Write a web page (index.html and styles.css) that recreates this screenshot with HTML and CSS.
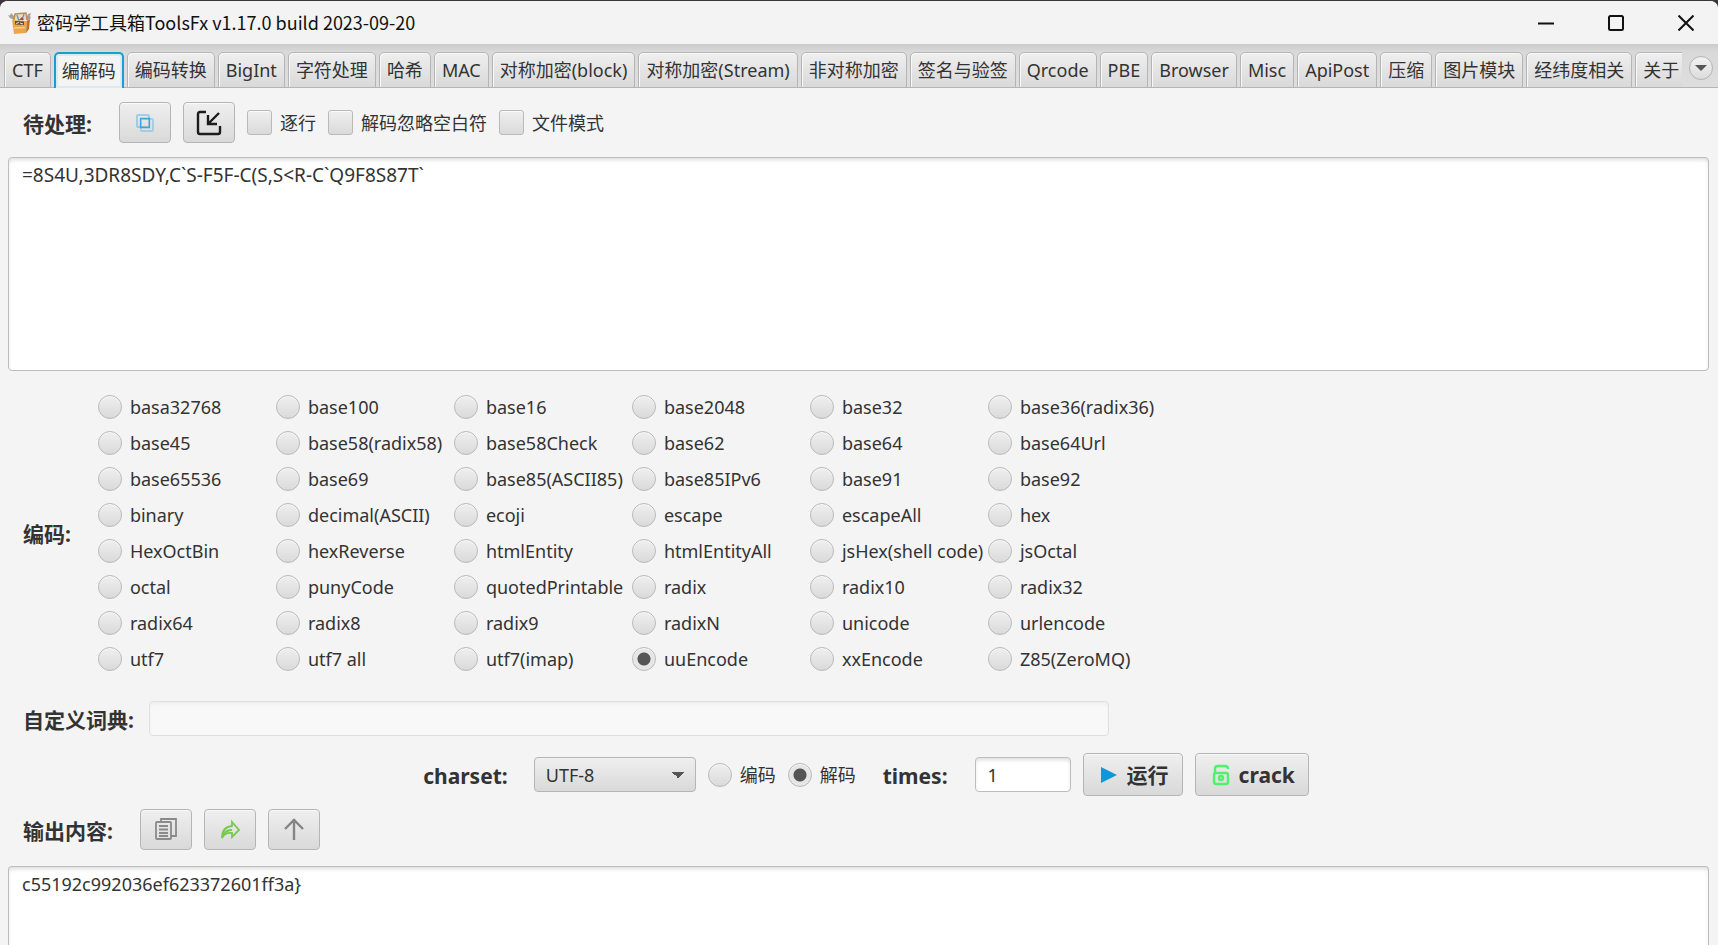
FILE: index.html
```html
<!DOCTYPE html>
<html lang="zh-CN">
<head>
<meta charset="utf-8">
<title>密码学工具箱ToolsFx</title>
<link rel="stylesheet" href="styles.css">
</head>
<body>
<div class="window">
  <header class="titlebar">
    <svg class="app-icon" viewBox="0 0 24 24" aria-hidden="true">
      <path d="M6 9 2 7 0 4l2 .5L3 2l3 3zM18 8l2-5 3-1-1 3 1 2-4 3z" fill="#a3a19e"/>
      <path d="M6 9 7 3l11-1 1 7" fill="#e9dccb" stroke="#c98b45" stroke-width="1.500"/>
      <path d="M9 4l2 6M16 3l-2 6" stroke="#5f9db5" stroke-width="1.400"/>
      <path d="M11 9l3-3 2 3" fill="#c23a2b"/>
      <path d="M4 9l15 1-1 12-12 1z" fill="#eca64a"/>
      <path d="M19 10l3-2-1 10-3 4z" fill="#bd6f28"/>
      <path d="M7 10l9 .5v3.500l-9-.5z" fill="#5d4a38"/>
      <path d="M8 12.500l3-1M12 12l3 1" stroke="#dcdcdc" stroke-width="1.200"/>
      <path d="M6 17l11-.5" stroke="#f8cd85" stroke-width="1.500"/>
    </svg>
    <h1 class="title">密码学工具箱ToolsFx v1.17.0 build 2023-09-20</h1>
    <div class="window-buttons">
      <button type="button" class="window-button" aria-label="最小化"><svg viewBox="0 0 16 16"><path d="M0 8.500h16"/></svg></button>
      <button type="button" class="window-button" aria-label="最大化"><svg viewBox="0 0 16 16"><rect x="1" y="1" width="14" height="14" rx="1.500"/></svg></button>
      <button type="button" class="window-button" aria-label="关闭"><svg viewBox="0 0 16 16"><path d="M.5.5l15 15M15.500.5l-15 15"/></svg></button>
    </div>
  </header>

  <nav class="tabbar">
    <div class="tabs">
      <button type="button" class="tab">CTF</button>
      <button type="button" class="tab tab-active">编解码</button>
      <button type="button" class="tab">编码转换</button>
      <button type="button" class="tab">BigInt</button>
      <button type="button" class="tab">字符处理</button>
      <button type="button" class="tab">哈希</button>
      <button type="button" class="tab">MAC</button>
      <button type="button" class="tab">对称加密(block)</button>
      <button type="button" class="tab">对称加密(Stream)</button>
      <button type="button" class="tab">非对称加密</button>
      <button type="button" class="tab">签名与验签</button>
      <button type="button" class="tab">Qrcode</button>
      <button type="button" class="tab">PBE</button>
      <button type="button" class="tab">Browser</button>
      <button type="button" class="tab">Misc</button>
      <button type="button" class="tab">ApiPost</button>
      <button type="button" class="tab">压缩</button>
      <button type="button" class="tab">图片模块</button>
      <button type="button" class="tab">经纬度相关</button>
      <button type="button" class="tab">关于</button>
    </div>
    <button type="button" class="tab-menu" aria-label="更多标签"><svg viewBox="0 0 12 8"><path d="M0 1h12L6 7z"/></svg></button>
  </nav>

  <main class="content">
    <div class="row input-row">
      <label class="heading" for="source">待处理:</label>
      <div class="tools">
        <button type="button" class="button icon-button" aria-label="复制"><svg class="icon" viewBox="0 0 24 24" fill="none" stroke="#3aa5e3"><rect x="4" y="4" width="12" height="12" rx="1" stroke-opacity=".4" stroke-width="2"/><rect x="8" y="8" width="12" height="12" rx="1" stroke-opacity=".35" stroke-width="2"/><path d="M7 16.500h9.500V7M17 7.500H7.500V17" stroke-width="1.300"/></svg></button>
        <button type="button" class="button icon-button" aria-label="导入"><svg class="icon icon-large" viewBox="0 0 28 28" fill="none" stroke="#1c1c1c" stroke-width="2.400"><path d="M11 3H5Q3 3 3 5v18q0 2 2 2h18q2 0 2-2v-6"/><path d="M24 4 13 15M13 6v9h9"/></svg></button>
        <label class="choice"><input type="checkbox" class="check">逐行</label>
        <label class="choice"><input type="checkbox" class="check">解码忽略空白符</label>
        <label class="choice"><input type="checkbox" class="check">文件模式</label>
      </div>
    </div>

    <textarea id="source" class="area source" spellcheck="false">=8S4U,3DR8SDY,C`S-F5F-C(S,S&lt;R-C`Q9F8S87T`</textarea>

    <div class="row codec-row">
      <span class="heading" id="codec-label">编码:</span>
      <div class="codecs" role="radiogroup" aria-labelledby="codec-label">
        <label class="choice"><input type="radio" name="codec" class="radio">basa32768</label>
        <label class="choice"><input type="radio" name="codec" class="radio">base100</label>
        <label class="choice"><input type="radio" name="codec" class="radio">base16</label>
        <label class="choice"><input type="radio" name="codec" class="radio">base2048</label>
        <label class="choice"><input type="radio" name="codec" class="radio">base32</label>
        <label class="choice"><input type="radio" name="codec" class="radio">base36(radix36)</label>
        <label class="choice"><input type="radio" name="codec" class="radio">base45</label>
        <label class="choice"><input type="radio" name="codec" class="radio">base58(radix58)</label>
        <label class="choice"><input type="radio" name="codec" class="radio">base58Check</label>
        <label class="choice"><input type="radio" name="codec" class="radio">base62</label>
        <label class="choice"><input type="radio" name="codec" class="radio">base64</label>
        <label class="choice"><input type="radio" name="codec" class="radio">base64Url</label>
        <label class="choice"><input type="radio" name="codec" class="radio">base65536</label>
        <label class="choice"><input type="radio" name="codec" class="radio">base69</label>
        <label class="choice"><input type="radio" name="codec" class="radio">base85(ASCII85)</label>
        <label class="choice"><input type="radio" name="codec" class="radio">base85IPv6</label>
        <label class="choice"><input type="radio" name="codec" class="radio">base91</label>
        <label class="choice"><input type="radio" name="codec" class="radio">base92</label>
        <label class="choice"><input type="radio" name="codec" class="radio">binary</label>
        <label class="choice"><input type="radio" name="codec" class="radio">decimal(ASCII)</label>
        <label class="choice"><input type="radio" name="codec" class="radio">ecoji</label>
        <label class="choice"><input type="radio" name="codec" class="radio">escape</label>
        <label class="choice"><input type="radio" name="codec" class="radio">escapeAll</label>
        <label class="choice"><input type="radio" name="codec" class="radio">hex</label>
        <label class="choice"><input type="radio" name="codec" class="radio">HexOctBin</label>
        <label class="choice"><input type="radio" name="codec" class="radio">hexReverse</label>
        <label class="choice"><input type="radio" name="codec" class="radio">htmlEntity</label>
        <label class="choice"><input type="radio" name="codec" class="radio">htmlEntityAll</label>
        <label class="choice"><input type="radio" name="codec" class="radio">jsHex(shell code)</label>
        <label class="choice"><input type="radio" name="codec" class="radio">jsOctal</label>
        <label class="choice"><input type="radio" name="codec" class="radio">octal</label>
        <label class="choice"><input type="radio" name="codec" class="radio">punyCode</label>
        <label class="choice"><input type="radio" name="codec" class="radio">quotedPrintable</label>
        <label class="choice"><input type="radio" name="codec" class="radio">radix</label>
        <label class="choice"><input type="radio" name="codec" class="radio">radix10</label>
        <label class="choice"><input type="radio" name="codec" class="radio">radix32</label>
        <label class="choice"><input type="radio" name="codec" class="radio">radix64</label>
        <label class="choice"><input type="radio" name="codec" class="radio">radix8</label>
        <label class="choice"><input type="radio" name="codec" class="radio">radix9</label>
        <label class="choice"><input type="radio" name="codec" class="radio">radixN</label>
        <label class="choice"><input type="radio" name="codec" class="radio">unicode</label>
        <label class="choice"><input type="radio" name="codec" class="radio">urlencode</label>
        <label class="choice"><input type="radio" name="codec" class="radio">utf7</label>
        <label class="choice"><input type="radio" name="codec" class="radio">utf7 all</label>
        <label class="choice"><input type="radio" name="codec" class="radio">utf7(imap)</label>
        <label class="choice"><input type="radio" name="codec" class="radio" checked>uuEncode</label>
        <label class="choice"><input type="radio" name="codec" class="radio">xxEncode</label>
        <label class="choice"><input type="radio" name="codec" class="radio">Z85(ZeroMQ)</label>
      </div>
    </div>

    <div class="row dict-row">
      <label class="heading" for="dict">自定义词典:</label>
      <input type="text" id="dict" class="field dict" disabled>
    </div>

    <div class="row run-row">
      <label class="heading" for="charset">charset:</label>
      <select id="charset" class="select"><option>UTF-8</option></select>
      <label class="choice"><input type="radio" name="mode" class="radio">编码</label>
      <label class="choice"><input type="radio" name="mode" class="radio" checked>解码</label>
      <label class="heading times-label" for="times">times:</label>
      <input type="text" id="times" class="field times" value="1">
      <button type="button" class="button text-button"><svg class="icon-small" viewBox="0 0 18 20"><path d="M1 2l16 8L1 18z" fill="#1296db"/></svg>运行</button>
      <button type="button" class="button text-button"><svg class="icon-small" viewBox="0 0 18 22" fill="none" stroke="#4cf36b" stroke-width="2.400"><rect x="2" y="9" width="14" height="11" rx="2"/><path d="M3 9V5q0-3 3-3h7q3 0 3 3"/><circle cx="9" cy="14" r="2"/></svg>crack</button>
    </div>

    <div class="row output-row">
      <label class="heading" for="result">输出内容:</label>
      <div class="tools">
        <button type="button" class="button icon-button" aria-label="复制结果"><svg class="icon" viewBox="0 0 24 24" fill="none" stroke="#8a8a8a" stroke-width="1.800"><rect x="2" y="4" width="15" height="17" rx="1"/><path d="M7 4V1h15v17h-5"/><path d="M5 8h9M5 11.500h9M5 15h9M5 18h9"/></svg></button>
        <button type="button" class="button icon-button" aria-label="转发"><svg class="icon" viewBox="0 0 24 24" fill="none" stroke="#78c850" stroke-width="1.800"><path d="M14 4l7 8-7 7v-4q-7-1-10 5 0-11 10-12z"/><path d="M5 17q3-5 9-5"/></svg></button>
        <button type="button" class="button icon-button" aria-label="上移"><svg class="icon" viewBox="0 0 24 24" fill="none" stroke="#858585" stroke-width="2.400"><path d="M12 22V1M3 11l9-9 9 9"/></svg></button>
      </div>
    </div>

    <textarea id="result" class="area result" spellcheck="false">c55192c992036ef623372601ff3a}</textarea>
  </main>
</div>
</body>
</html>
```

FILE: styles.css
```css
* {
  box-sizing: border-box;
}

body {
  margin: 0;
  background: #3a353b;
  color: #333;
  font-family: "Noto Sans", "Noto Sans CJK SC", sans-serif;
  font-size: 18px;
  line-height: 24px;
}

button, input, select, textarea {
  margin: 0;
  font: inherit;
  color: inherit;
}

.window {
  display: flex;
  flex-direction: column;
  height: 100vh;
  overflow: hidden;
  border-top: 1px solid #3a353b;
  border-radius: 8px 8px 0 0;
  background: #f4f4f4;
}

.titlebar {
  display: flex;
  flex: none;
  align-items: center;
  height: 43px;
  padding-left: 8px;
  background: #f3f3f3;
}

.app-icon {
  width: 24px;
  height: 24px;
}

.title {
  flex: 1;
  margin: 0 0 0 5px;
  color: #111;
  font-family: "Noto Sans CJK SC", sans-serif;
  font-size: 18px;
  font-weight: 400;
  line-height: 22px;
  padding-bottom: 2px;
}

.window-buttons {
  display: flex;
}

.window-button {
  display: grid;
  place-items: center;
  width: 70px;
  height: 42px;
  padding: 0;
  border: 0;
  background: none;
}

.window-button svg {
  width: 16px;
  height: 16px;
  margin-left: 5px;
  fill: none;
  stroke: #111;
  stroke-width: 2;
}

.tabbar {
  display: flex;
  flex: none;
  align-items: flex-end;
  height: 44px;
  padding-left: 4px;
  background: linear-gradient(#cbcbcb, #d9d9d9 8px, #dedede);
  box-shadow: inset 0 -1px #b5b5b5;
}

.tabs {
  display: flex;
  flex: 1;
  gap: 3px;
  min-width: 0;
  overflow: hidden;
}

.tab {
  flex: none;
  height: 36px;
  padding: 0 7px;
  border: 1px solid #b5b5b5;
  border-radius: 5px 5px 0 0;
  background: linear-gradient(#efefef, #d9d9d9);
  box-shadow: inset 1px 1px #f8f8f8;
  white-space: nowrap;
}

.tab-active {
  border: 2px solid #1a9fcd;
  border-bottom: 0;
  padding: 0 6px;
  background: #f4f4f4;
  box-shadow: inset 0 0 0 2px #dcebf1;
}

.tab-menu {
  display: grid;
  flex: none;
  place-items: center;
  width: 24px;
  height: 24px;
  margin: 0 5px 8px 7px;
  padding: 0;
  border: 1px solid #b5b5b5;
  border-radius: 50%;
  background: linear-gradient(#f2f2f2, #dcdcdc);
}

.tab-menu svg {
  width: 12px;
  height: 8px;
  fill: #555;
}

.content {
  display: flex;
  flex: 1;
  flex-direction: column;
  min-height: 0;
  padding: 0 9px 0 8px;
}

.row {
  display: flex;
  flex: none;
  align-items: center;
  padding-left: 15px;
}

.heading {
  flex: none;
  padding-top: 2px;
  font-size: 21px;
  font-weight: 700;
  line-height: 28px;
}

.tools {
  display: flex;
  align-items: center;
  gap: 12px;
}

.input-row {
  gap: 27px;
  padding-top: 14px;
  padding-bottom: 14px;
}

.button {
  border: 1px solid #b5b5b5;
  border-radius: 4px;
  background: linear-gradient(#efefef, #d9d9d9);
  box-shadow: inset 0 1px #fafafa;
}

.icon-button {
  display: grid;
  place-items: center;
  width: 52px;
  height: 41px;
  padding: 0;
}

.icon {
  width: 24px;
  height: 24px;
}

.icon-large {
  width: 28px;
  height: 28px;
}

.choice {
  display: flex;
  align-items: center;
  gap: 8px;
  white-space: nowrap;
}

.check, .radio {
  flex: none;
  appearance: none;
  width: 25px;
  height: 25px;
  border: 1px solid #b9b9b9;
  background: linear-gradient(#efefef, #dadada);
  box-shadow: inset 0 1px #fafafa;
}

.check {
  border-radius: 3px;
}

.radio {
  width: 24px;
  height: 24px;
  border-radius: 50%;
}

.radio:checked {
  background: radial-gradient(circle, #555 6px, #e6e6e6 7px);
}

.area {
  display: block;
  width: 100%;
  padding: 5px 13px;
  border: 1px solid #bdbdbd;
  border-radius: 4px;
  outline: 0;
  background: #fff;
  box-shadow: inset 0 3px 4px -1px #ddd;
  resize: none;
}

.source {
  flex: none;
  height: 214px;
  font-size: 19px;
}

.codec-row {
  gap: 27px;
  padding-top: 18px;
}

.codecs {
  display: grid;
  grid-template-columns: repeat(6, 178px);
  grid-auto-rows: 36px;
}

.dict-row {
  gap: 15px;
  padding-top: 24px;
}

.field {
  height: 35px;
  padding: 0 12px;
  border: 1px solid #bdbdbd;
  border-radius: 4px;
  background: #fff;
  box-shadow: inset 0 3px 4px -1px #ddd;
}

.field:disabled {
  border-color: #dfdfdf;
  background: #f8f8f8;
  box-shadow: inset 0 3px 4px -1px #eee;
}

.dict {
  flex: 0 1 960px;
}

.run-row {
  justify-content: center;
  gap: 12px;
  padding-top: 17px;
}

.select {
  appearance: none;
  width: 162px;
  height: 35px;
  margin-left: 14px;
  padding: 0 11px;
  border: 1px solid #b5b5b5;
  border-radius: 4px;
  background:
    conic-gradient(from -45deg at 50% 100%, #555 90deg, transparent 0) right 11px center / 12px 6px no-repeat,
    linear-gradient(#efefef, #d9d9d9);
}

.times-label {
  margin: 0 15px;
}

.times {
  width: 96px;
}

.text-button {
  display: flex;
  align-items: center;
  gap: 9px;
  height: 43px;
  padding: 0 13px 0 16px;
  font-size: 21px;
  font-weight: 700;
}

.icon-small {
  width: 18px;
  height: 22px;
}

.output-row {
  gap: 27px;
  padding-top: 13px;
  padding-bottom: 16px;
}

.result {
  flex: 1;
  min-height: 78px;
  border-bottom: 0;
  border-radius: 4px 4px 0 0;
}
```
